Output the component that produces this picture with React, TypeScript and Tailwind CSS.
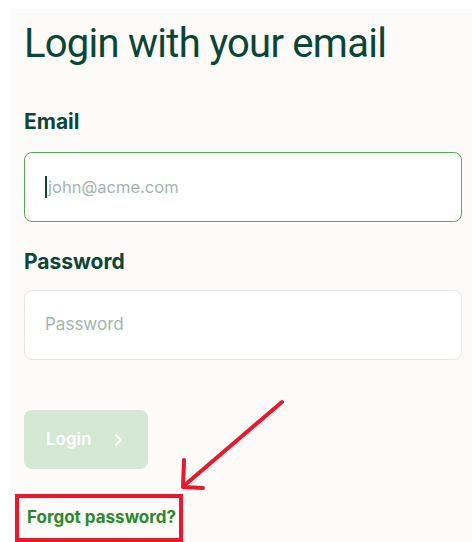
export default function App() {
  return (
    <div className="relative min-h-[542px] w-[472px] bg-white pl-[12px] pt-[9px]" style={{ fontFamily: 'Inter, "Noto Sans", sans-serif' }}>
      <div className="flex min-h-[529px] flex-col bg-[#fcfbfa] pl-[12px] pr-[10px] pt-[11px]">
        <h1 className="font-['Roboto',sans-serif] text-[40px] font-normal leading-[48px] tracking-[-0.75px] text-[#0b4535]">Login with your email</h1>

        <label className="mt-[40px] text-[21px] font-bold leading-[28px] text-[#0d4636]">Email</label>
        <div className="mt-[16px] flex h-[70px] items-center rounded-[8px] border-[1.5px] border-[#5aa85a] bg-white px-[20px]">
          <span className="mr-[1px] h-[22px] w-[2px] bg-[#0d4636]" />
          <span className="text-[16.5px] text-[#a3b5ad]">john@acme.com</span>
        </div>

        <label className="mt-[26px] text-[21px] font-bold leading-[28px] text-[#0d4636]">Password</label>
        <div className="mt-[14px] flex h-[70px] items-center rounded-[8px] border border-[#e6e8e6] bg-white px-[20px]">
          <span className="text-[17px] text-[#a3b5ad]">Password</span>
        </div>

        <button className="mt-[50px] flex h-[59px] w-[124px] items-center gap-[22px] rounded-[8px] bg-[#d5e8d4] pl-[22px] text-[17px] font-semibold text-white">
          Login
          <svg width="10" height="14" viewBox="0 0 10 14" fill="none" stroke="white" strokeWidth="2.2" strokeLinecap="round" strokeLinejoin="round">
            <path d="M3 2l5 5-5 5" />
          </svg>
        </button>

        <div className="mt-[25px] -ml-[9px] flex h-[48px] w-[168px] items-center border-[4px] border-[#e8192c] pl-[8px]">
          <span className="text-[17px] font-bold text-[#2a8a2a]">Forgot password?</span>
        </div>
      </div>

      <svg className="absolute left-0 top-0" width="472" height="542" viewBox="0 0 472 542" fill="none">
        <path d="M282 402 L186 484" stroke="#e8192c" strokeWidth="4" strokeLinecap="round" />
        <path d="M184 460 L183 487 L203 488" stroke="#e8192c" strokeWidth="4" strokeLinecap="round" strokeLinejoin="round" />
      </svg>
    </div>
  );
}
